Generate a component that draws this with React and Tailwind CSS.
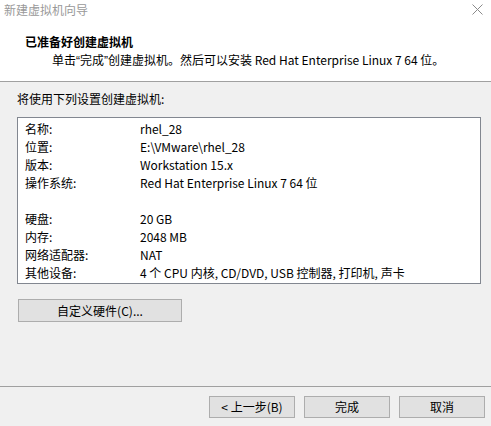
import React from 'react';

const font = { fontFamily: '"Noto Sans CJK SC", "Liberation Sans", sans-serif' };

const rows = [
    ['名称:', 'rhel_28'],
    ['位置:', 'E:\\VMware\\rhel_28'],
    ['版本:', 'Workstation 15.x'],
    ['操作系统:', 'Red Hat Enterprise Linux 7 64 位'],
    null,
    ['硬盘:', '20 GB'],
    ['内存:', '2048 MB'],
    ['网络适配器:', 'NAT'],
    ['其他设备:', '4 个 CPU 内核, CD/DVD, USB 控制器, 打印机, 声卡'],
];

function WinButton({ children, className }) {
    return (
        <div className={`flex items-center justify-center bg-[#e1e1e1] border border-[#adadad] text-[12px] text-black ${className}`}>
            {children}
        </div>
    );
}

export default function App() {
    return (
        <div className="w-[491px] h-[426px] flex flex-col bg-[#f0f0f0] overflow-hidden" style={font}>
            {/* title + header */}
            <div className="h-[82px] bg-white border-b border-[#a0a0a0] flex flex-col">
                <div className="h-[20px] flex items-center justify-between pl-[4px] pr-[8px]">
                    <span className="text-[12px] text-[#999999] leading-none">新建虚拟机向导</span>
                    <svg width="11" height="11" viewBox="0 0 11 11" className="-mt-[2px]">
                        <path d="M0.5 0.5 L10.5 10.5 M10.5 0.5 L0.5 10.5" stroke="#8a8a8a" strokeWidth="1" />
                    </svg>
                </div>
                <div className="pl-[25px] pt-[13px] text-[12px] leading-[18px] font-bold text-black">已准备好创建虚拟机</div>
                <div className="pl-[52px] text-[12px] leading-[18px] text-black">
                    单击<span className="font-['Liberation_Sans']">“</span>完成<span className="font-['Liberation_Sans']">”</span>创建虚拟机。然后可以安装 Red Hat Enterprise Linux 7 64 位。
                </div>
            </div>

            {/* body */}
            <div className="flex-1 flex flex-col px-[17px]">
                <div className="pt-[8px] text-[12px] leading-[18px] text-black">将使用下列设置创建虚拟机:</div>
                <div className="mt-[9px] w-[464px] bg-white border border-[#828790] pt-[2px] pb-[1px] pl-[7px]">
                    {rows.map((row, i) => (
                        row ? (
                            <div key={i} className="flex h-[18px] items-center text-[12px] text-black whitespace-nowrap">
                                <span className="w-[115px]">{row[0]}</span>
                                <span>{row[1]}</span>
                            </div>
                        ) : (
                            <div key={i} className="h-[18px]" />
                        )
                    ))}
                </div>
                <WinButton className="mt-[15px] ml-[1px] w-[164px] h-[23px]">自定义硬件(C)...</WinButton>
            </div>

            {/* footer */}
            <div className="h-[40px] border-t border-[#a0a0a0] flex justify-end items-start pt-[9px] pr-[6px] gap-[9px]">
                <WinButton className="w-[86px] h-[22px]">&lt; 上一步(B)</WinButton>
                <WinButton className="w-[86px] h-[22px]">完成</WinButton>
                <WinButton className="w-[86px] h-[22px]">取消</WinButton>
            </div>
        </div>
    );
}
